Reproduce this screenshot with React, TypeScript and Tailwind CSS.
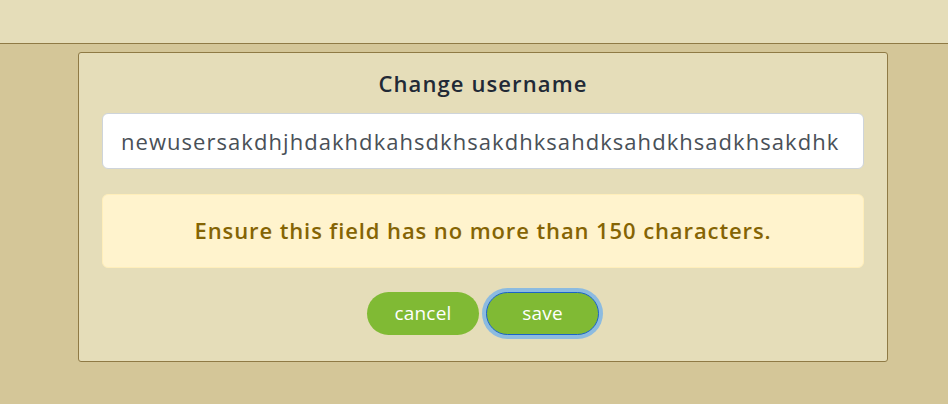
import React from "react";

export default function App() {
  const font = { fontFamily: '"Open Sans", "Noto Sans", sans-serif' };
  return (
    <div className="min-h-[404px] w-full bg-[#d4c698]" style={font}>
      <div className="h-[44px] border-b border-[#8f7a45] bg-[#e5ddb9]" />
      <div className="pt-[8px] pl-[78px]">
        <div className="w-[810px] rounded-[3px] border border-[#8f7a45] bg-[#e5ddb9] px-[23px] pt-[18px] pb-[26px]">
          <h5 className="text-center text-[22px] leading-[24px] font-semibold tracking-[1.1px] text-[#212936]">
            Change username
          </h5>
          <div className="mt-[18px] flex h-[56px] items-center rounded-[6px] border border-[#ced4da] bg-white pl-[18px]">
            <span className="text-[22px] tracking-[1.05px] text-[#495057] whitespace-nowrap">
              newusersakdhjhdakhdkahsdkhsakdhksahdksahdkhsadkhsakdhk
            </span>
          </div>
          <div className="mt-[25px] flex h-[74px] items-center justify-center rounded-[6px] border border-[#ffeeba] bg-[#fff3cd] pb-[2px]">
            <span className="text-[22px] font-semibold tracking-[0.9px] text-[#856404]">
              Ensure this field has no more than 150 characters.
            </span>
          </div>
          <div className="mt-[24px] flex justify-center gap-[7px]">
            <button className="h-[43px] w-[112px] rounded-full bg-[#80ba34] text-[19px] tracking-[0.2px] text-white">
              cancel
            </button>
            <button className="h-[43px] w-[113px] rounded-full border border-[#1a63c9] bg-[#80ba34] text-[19px] tracking-[0.2px] text-white shadow-[0_0_0_4px_#8cbbe0]">
              save
            </button>
          </div>
        </div>
      </div>
    </div>
  );
}
